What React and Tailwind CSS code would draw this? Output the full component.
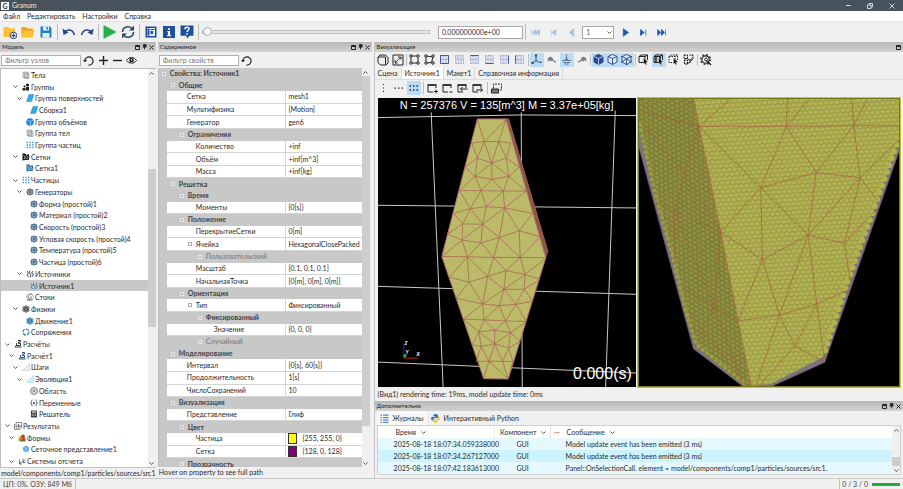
import React from "react";

const BLUE = "#1d4f9e";

function Svg({ className = "w-2 h-2", box = 16, children, ...rest }) {
  return (
    <svg viewBox={`0 0 ${box} ${box}`} className={`${className} shrink-0`} fill="none" aria-hidden="true" {...rest}>
      {children}
    </svg>
  );
}

/* ---------- tree icons ---------- */

const Bodies = () => (
  <Svg><path d="M2 2h9v11H2zM5 4h9v11H5z" fill="#ddd" stroke="#777" /><path d="M7 7h5M7 10h5" stroke="#999" /></Svg>
);
const Groups = () => (
  <Svg><circle cx="11" cy="4" r="3" fill="#111" /><circle cx="5" cy="7" r="2" fill="#111" /><path d="M1 10h6v5H1zM8 8h6v7H8z" fill="#222" /></Svg>
);
const Surface = () => <Svg><path d="M6 1h10l-5 14H1z" fill="#31a9e6" stroke="#1b8ccb" /></Svg>;
const Volume = () => (
  <Svg><circle cx="8" cy="8" r="7.500" fill="#1d86e0" /><path d="M3 5l6 2 5-3M9 7v8" stroke="#a8dcff" strokeWidth="1.500" /></Svg>
);
const Dots = () => (
  <Svg><path d="M1 3h14M1 8h14M1 13h14" stroke="#4a9be0" strokeWidth="3" strokeDasharray="3 2.500" /></Svg>
);
function Mesh({ color }) {
  return (
    <Svg>
      <path d="M1 1h5l3 3 4-2 2 6-2 6H6l-5 1z" fill={color} />
      <path d="M3 5l4 3-3 4M9 5l3 4-4 4" stroke="#fff" strokeWidth="1.500" />
    </Svg>
  );
}
function Gen({ color }) {
  return (
    <Svg>
      <circle cx="8" cy="8" r="6.500" fill={color} />
      <path d="M8 0v16M0 8h16M2 2l12 12M14 2L2 14" stroke={color} />
      <path d="M4 6l4-2 4 3-1 4-5 1z" stroke="#dfe6ee" />
    </Svg>
  );
}
function Source({ color }) {
  return (
    <Svg>
      <path d="M2 2l3 5-3 2 3 5M8 1L6 6l4 3-2 6M14 2l-3 4 4 2-3 6" stroke={color} strokeWidth="1.800" />
    </Svg>
  );
}
const Sink = () => (
  <Svg><path d="M8 8c2-2 4 1 2 3s-6 1-6-3 5-7 9-4M2 14h11" stroke="#444" strokeWidth="1.500" /><circle cx="8" cy="8" r="7" stroke="#888" /></Svg>
);
function Atom({ color }) {
  return (
    <Svg>
      <g stroke={color} strokeWidth="1.800">
        <ellipse cx="8" cy="8" rx="3" ry="7" />
        <ellipse cx="8" cy="8" rx="3" ry="7" transform="rotate(60 8 8)" />
        <ellipse cx="8" cy="8" rx="3" ry="7" transform="rotate(120 8 8)" />
      </g>
      <circle cx="8" cy="8" r="2" fill={color} />
    </Svg>
  );
}
const Ring = () => <Svg><circle cx="8" cy="8" r="6" stroke="#2b7fb0" strokeWidth="2.500" strokeDasharray="7 2" /></Svg>;
function Calc({ color }) {
  return (
    <Svg><path d="M8 1h5v3H9v3h4v4H5V6M2 14h13M4 11l-2 3" stroke={color} strokeWidth="2" /></Svg>
  );
}
function Steps({ fill, line }) {
  return <Svg><path d="M15 1v14H1z" fill={fill} stroke={line} /></Svg>;
}
const Domain = () => (
  <Svg><circle cx="8" cy="8" r="7" stroke="#555" strokeWidth="1.500" /><path d="M8 2v12M2 8h12M4 4l8 8M12 4l-8 8" stroke="#666" /></Svg>
);
const Vars = () => (
  <Svg><path d="M5 2C2 2 4 8 1 8c3 0 1 6 4 6M11 2c3 0 1 6 4 6-3 0-1 6-4 6M6 6l4 5M10 6l-4 5" stroke="#222" strokeWidth="1.500" /></Svg>
);
const Solver = () => (
  <Svg><path d="M2 1h12v14H2z" fill="#444" /><path d="M4 4h8" stroke="#fff" strokeWidth="2" /><path d="M4 8h8M4 11h8" stroke="#ccc" strokeDasharray="2 1" strokeWidth="1.500" /></Svg>
);
const Results = () => (
  <Svg><path d="M4 1h11v11H4zM1 4v11h11" stroke="#555" strokeWidth="1.300" /><path d="M6 10V7M9 10V4M12 10V6" stroke="#555" strokeWidth="1.800" /></Svg>
);
const Forms = () => (
  <Svg><path d="M1 8l4-5 3 5v6H1z" fill="#e0a020" /><circle cx="10" cy="5" r="4" fill="#8a5a30" /><path d="M8 8h7v7H8z" fill="#c8442c" /><path d="M4 10h5v5H4z" fill="#3f8f45" /></Svg>
);
const MeshView = () => (
  <Svg><path d="M8 1l6 4v6l-6 4-6-4V5z" fill="#5aa9e6" /><path d="M5 5l3 2 4-1M8 7v6" stroke="#d5efff" /></Svg>
);
const Frames = () => (
  <Svg><path d="M3 5v9h5M3 14l4-5M10 3v8h5M10 11l4-6" stroke="#444" strokeWidth="1.500" /></Svg>
);

const TREE = [
  [2, "Тела", <Bodies />],
  [2, "Группы", <Groups />, true],
  [3, "Группа поверхностей", <Surface />, true],
  [4, "Сборка1", <Surface />],
  [3, "Группа объёмов", <Volume />],
  [3, "Группа тел", <Bodies />],
  [3, "Группа частиц", <Dots />],
  [2, "Сетки", <Mesh color="#111" />, true],
  [3, "Сетка1", <Mesh color="#1f6f9c" />],
  [2, "Частицы", <Dots />, true],
  [3, "Генераторы", <Gen color="#666" />, true],
  [4, "Форма (простой)1", <Gen color="#4b7196" />],
  [4, "Материал (простой)2", <Gen color="#4b7196" />],
  [4, "Скорость (простой)3", <Gen color="#4b7196" />],
  [4, "Угловая скорость (простой)4", <Gen color="#4b7196" />],
  [4, "Температура (простой)5", <Gen color="#4b7196" />],
  [4, "Частица (простой)6", <Gen color="#4b7196" />],
  [3, "Источники", <Source color="#444" />, true],
  [4, "Источник1", <Source color="#2f7fb5" />],
  [3, "Стоки", <Sink />],
  [2, "Физики", <Atom color="#555" />, true],
  [3, "Движение1", <Atom color="#2a81ad" />],
  [2, "Сопряжения", <Ring />],
  [0, "Расчёты", <Calc color="#333" />, true],
  [1, "Расчёт1", <Calc color="#24508c" />, true],
  [2, "Шаги", <Steps fill="#eee" line="#bbb" />, true],
  [3, "Эволюция1", <Steps fill="#d6ecfa" line="#9ccbe8" />, true],
  [4, "Область", <Domain />],
  [4, "Переменные", <Vars />],
  [4, "Решатель", <Solver />],
  [0, "Результаты", <Results />, true],
  [1, "Формы", <Forms />, true],
  [2, "Сеточное представление1", <MeshView />],
  [1, "Системы отсчета", <Frames />, true],
];

const TREE_PAD = ["pl-[4px]", "pl-[8px]", "pl-[12px]", "pl-[16px]", "pl-[20px]"];

// [kind, level, name, value, extra]; kinds: g = group, d = disabled group, p = property
const PROPS = [
  ["g", 0, "Свойства: Источник1"],
  ["g", 1, "Общие"],
  ["p", 2, "Сетка", "mesh1"],
  ["p", 2, "Мультифизика", "{Motion}"],
  ["p", 2, "Генератор", "gen6"],
  ["g", 2, "Ограничения"],
  ["p", 3, "Количество", "+inf"],
  ["p", 3, "Объём", "+inf[m^3]"],
  ["p", 3, "Масса", "+inf[kg]"],
  ["g", 1, "Решетка"],
  ["g", 2, "Время"],
  ["p", 3, "Моменты", "{0[s]}"],
  ["g", 2, "Положение"],
  ["p", 3, "ПерекрытиеСетки", "0[m]"],
  ["p", 3, "Ячейка", "HexagonalClosePacked", "box"],
  ["d", 4, "Пользовательский"],
  ["p", 3, "Масштаб", "{0.1, 0.1, 0.1}"],
  ["p", 3, "НачальнаяТочка", "{0[m], 0[m], 0[m]}"],
  ["g", 2, "Ориентация"],
  ["p", 3, "Тип", "Фиксированный", "box"],
  ["g", 4, "Фиксированный"],
  ["p", 5, "Значение", "{0, 0, 0}"],
  ["d", 4, "Случайный"],
  ["g", 1, "Моделирование"],
  ["p", 2, "Интервал", "{0[s], 60[s]}"],
  ["p", 2, "Продолжительность", "1[s]"],
  ["p", 2, "ЧислоСохранений", "10"],
  ["g", 1, "Визуализация"],
  ["p", 2, "Представление", "Глиф"],
  ["g", 2, "Цвет"],
  ["p", 3, "Частица", "{255, 255, 0}", "bg-[#ffff00]"],
  ["p", 3, "Сетка", "{128, 0, 128}", "bg-[#800080]"],
  ["g", 2, "Прозрачность"],
];

const GROUP_PAD = ["pl-[3px]", "pl-[12px]", "pl-[21px]", "pl-[30px]", "pl-[39px]"];
const PROP_PAD = ["", "", "pl-[12px]", "pl-[21px]", "pl-[30px]", "pl-[39px]"];

/* ---------- small shared pieces ---------- */

function Chevron({ up, className = "w-[5px] h-[5px]" }) {
  return (
    <Svg className={className} box={10}>
      <path d={up ? "M1 7l4-4 4 4" : "M1 3l4 4 4-4"} stroke="#444" strokeWidth="1.800" />
    </Svg>
  );
}

function DockTitle({ title, full = true }) {
  return (
    <div className="h-[10px] shrink-0 flex items-center justify-between px-[2px] bg-linear-to-b from-[#b8b8b8] to-[#d2d2d2]">
      <span className="text-[6px] leading-[10px] text-[#222]">{title}</span>
      <span className="flex items-center gap-[2px]">
        <Svg className="w-[5px] h-[5px]" box={10}><path d="M1 1h8v8H1zM1 3h8" stroke="#222" strokeWidth="2" /></Svg>
        {full && <Svg className="w-[5px] h-[6px]" box={10}><path d="M3 0h5v5H3zM1 5h8M5 5v5" fill="#222" stroke="#222" strokeWidth="1.500" /></Svg>}
        {full && <Svg className="w-[5px] h-[5px]" box={10}><path d="M1 1l8 8M9 1l-8 8" stroke="#222" strokeWidth="2" /></Svg>}
      </span>
    </div>
  );
}

function Scrollbar({ children }) {
  return (
    <div className="w-2 shrink-0 flex flex-col items-center bg-[#f0f0f0]">
      <span className="h-2 flex items-center"><Chevron up /></span>
      <div className="flex-1 self-stretch flex flex-col">{children}</div>
      <span className="h-2 flex items-center"><Chevron /></span>
    </div>
  );
}

function Btn({ label, on, className = "w-[14px] h-[14px]", children }) {
  return (
    <button type="button" aria-label={label} className={`${className} shrink-0 flex items-center justify-center ${on ? "bg-[#bcdcf4]" : ""}`}>
      {children}
    </button>
  );
}

const Sep = ({ className = "mx-px h-3" }) => <span className={`w-px shrink-0 bg-[#bdbdbd] ${className}`} />;

const Rotate = () => (
  <Svg className="w-[11px] h-[11px]" box={24}>
    <path d="M4 14a9 9 0 1 1 8 8" stroke="#222" strokeWidth="2.500" />
    <path d="M0 11l4 5 5-5z" fill="#222" />
  </Svg>
);

/* ---------- top area ---------- */

function TitleBar() {
  return (
    <header className="h-[11px] shrink-0 flex items-center justify-between bg-[#48525a] text-white pl-px">
      <div className="flex items-center gap-[3px]">
        <span className="w-2 h-2 flex items-center justify-center bg-white text-[#16305c] text-[7px] leading-[8px] font-bold">G</span>
        <span className="text-[7px] leading-[11px] text-[#e8e8e8]">Granum</span>
      </div>
      <div className="flex items-center gap-[14px] pr-[7px]">
        <Btn label="Свернуть" className="w-2 h-2"><Svg className="w-[5px] h-[5px]" box={10}><path d="M0 5h10" stroke="#fff" strokeWidth="1.500" /></Svg></Btn>
        <Btn label="Развернуть" className="w-2 h-2"><Svg className="w-[6px] h-[6px]" box={12}><path d="M1 4h7v7H1zM4 4V1h7v7H8" stroke="#fff" strokeWidth="1.500" /></Svg></Btn>
        <Btn label="Закрыть" className="w-2 h-2"><Svg className="w-[6px] h-[6px]" box={12}><path d="M1 1l10 10M11 1L1 11" stroke="#fff" strokeWidth="1.500" /></Svg></Btn>
      </div>
    </header>
  );
}

function MenuBar() {
  return (
    <nav className="h-[11px] shrink-0 flex items-center gap-[7px] pl-[3px] bg-white border-b border-[#e4e4e4] text-[7px] leading-[10px]">
      {["Файл", "Редактировать", "Настройки", "Справка"].map((m) => (
        <button key={m} type="button">{m}</button>
      ))}
    </nav>
  );
}

function FolderIcon({ plus }) {
  return (
    <Svg className="w-[14px] h-[14px]" box={28}>
      <path d="M1 4h9l3 3h11v17H1z" fill={plus ? "#ffc02e" : "#f0a020"} />
      {!plus && <path d="M5 11h22l-4 14H1z" fill="#ffc233" />}
      {plus && <circle cx="21" cy="21" r="6.500" fill="#fff" stroke="#2c3e63" strokeWidth="2" />}
      {plus && <path d="M21 17v8M17 21h8" stroke="#2c3e63" strokeWidth="2.500" />}
    </Svg>
  );
}

function Toolbar() {
  const big = "w-[14px] h-[14px]";
  return (
    <div className="h-5 shrink-0 flex items-center pl-[3px] bg-[#f0f0f0]">
      <div className="flex gap-1">
        <Btn label="Новый"><FolderIcon plus /></Btn>
        <Btn label="Открыть"><FolderIcon /></Btn>
        <Btn label="Сохранить">
          <Svg className="w-3 h-3" box={24}><path d="M1 1h19l3 3v19H1z" fill="#1f7fc4" /><path d="M6 1h12v8H6zM5 14h14v9H5z" fill="#eaf4fb" /><path d="M13 2h3v5h-3z" fill="#1f7fc4" /></Svg>
        </Btn>
      </div>
      <Sep className="mx-1 h-4" />
      <div className="flex gap-1">
        <Btn label="Отменить"><Svg className={big} box={28}><path d="M5 15c5-8 17-7 20 5" stroke="#2e4487" strokeWidth="3" /><path d="M1 7l2 13 10-5z" fill="#2e4487" /></Svg></Btn>
        <Btn label="Вернуть"><Svg className={big} box={28}><path d="M23 15C18 7 6 8 3 20" stroke="#2e4487" strokeWidth="3" /><path d="M27 7l-2 13-10-5z" fill="#2e4487" /></Svg></Btn>
      </div>
      <Sep className="mx-1 h-4" />
      <div className="flex gap-1">
        <Btn label="Запуск"><Svg className={big} box={28}><path d="M1 0v28l26-14z" fill="#27b14b" /></Svg></Btn>
        <Btn label="Обновить">
          <Svg className={big} box={28}><path d="M3 14C3 3 17 0 23 8M25 14c0 11-14 14-20 6" stroke="#34495e" strokeWidth="3" /><path d="M26 1v10H16zM2 27V17h10z" fill="#34495e" /></Svg>
        </Btn>
      </div>
      <Sep className="mx-1 h-4" />
      <div className="flex gap-1">
        <Btn label="Окна"><Svg className="w-3 h-3" box={24}><path d="M1 1h22v22H1z" fill={BLUE} /><path d="M4 4h16v16H4z" fill="#e6eef8" /><path d="M5 5h4v14H5zM11 6h8v2h-8zM11 10h5v6h-5z" fill={BLUE} /></Svg></Btn>
        <Btn label="Сведения"><Svg className="w-3 h-3" box={22}><path d="M0 0h22v22H0z" fill={BLUE} /><path d="M9 4h4v3H9zM8 9h5v8h2v2H7v-2h2v-6H8z" fill="#fff" /></Svg></Btn>
        <Btn label="Помощь"><Svg className={big} box={26}><path d="M1 1h24v19h-7l-5 5-1-5H1z" fill={BLUE} /><path d="M9 8c0-5 8-5 8-1 0 3-4 3-4 6M13 15v3" stroke="#fff" strokeWidth="2.500" /></Svg></Btn>
      </div>
      <Sep className="ml-1 mr-[3px] h-4" />
      <input
        type="range"
        aria-label="Время"
        defaultValue="0"
        className="flex-[232] min-w-0 h-[9px] appearance-none bg-transparent [&::-webkit-slider-runnable-track]:h-1 [&::-webkit-slider-runnable-track]:border [&::-webkit-slider-runnable-track]:border-[#c4c4c4] [&::-webkit-slider-runnable-track]:bg-[#e4e4e4] [&::-webkit-slider-thumb]:appearance-none [&::-webkit-slider-thumb]:w-[9px] [&::-webkit-slider-thumb]:h-[9px] [&::-webkit-slider-thumb]:-mt-[4px] [&::-webkit-slider-thumb]:rounded-full [&::-webkit-slider-thumb]:border [&::-webkit-slider-thumb]:border-[#adadad] [&::-webkit-slider-thumb]:bg-[#f6f6f6]"
      />
      <input
        type="text"
        aria-label="Текущее время"
        defaultValue="0.000000000e+00"
        className="ml-2 flex-[79] min-w-0 h-[13px] px-[3px] bg-white border border-[#a8a8a8] text-[7px] leading-[11px]"
      />
      <Sep className="mx-[2px] h-4" />
      <div className="flex-[382] flex items-center gap-1">
        {["M1 2v8M2 6l5-4v8zM7 6l5-4v8z", "M3 2v8M4 6l5-4v8z", "M3 6l6-5v10z"].map((d, i) => (
          <Btn key={d} label={["В начало", "Шаг назад", "Назад"][i]}>
            <Svg className="w-[9px] h-[9px]" box={12}><path d={d} fill="#a9c1e2" stroke="#a9c1e2" /></Svg>
          </Btn>
        ))}
        <div className="relative flex">
          <select aria-label="Шаг" className="block appearance-none w-8 h-[13px] pl-[3px] bg-white border border-[#a8a8a8] text-[7px] leading-[11px] text-[#666]">
            <option>1</option>
          </select>
          <span className="absolute inset-y-0 right-[2px] flex items-center pointer-events-none"><Chevron /></span>
        </div>
        {["M3 1v10l7-5z", "M2 2v8l5-4zM9 2v8", "M1 2v8l4-4zM6 2v8l4-4zM11.500 2v8"].map((d, i) => (
          <Btn key={d} label={["Вперёд", "Шаг вперёд", "В конец"][i]}>
            <Svg className="w-[9px] h-[9px]" box={12}><path d={d} fill="#1f57b0" stroke="#1f57b0" /></Svg>
          </Btn>
        ))}
      </div>
    </div>
  );
}

/* ---------- model tree ---------- */

function ModelDock() {
  return (
    <section className="flex-[156] min-w-0 flex flex-col bg-[#f0f0f0]">
      <DockTitle title="Модель" />
      <div className="h-4 shrink-0 flex items-center pl-px">
        <input type="text" aria-label="Фильтр узлов" placeholder="Фильтр узлов" className="w-20 h-[11px] px-[3px] bg-white border border-[#b0b0b0] text-[7px] leading-[9px] placeholder:text-[#777]" />
        <Btn label="Сбросить" className="w-[15px] h-[14px]"><Rotate /></Btn>
        <Btn label="Развернуть всё"><Svg className="w-[9px] h-[9px]"><path d="M8 0v16M0 8h16" stroke="#222" strokeWidth="2.500" /></Svg></Btn>
        <Btn label="Свернуть всё"><Svg className="w-[9px] h-[9px]"><path d="M0 8h16" stroke="#222" strokeWidth="2.500" /></Svg></Btn>
        <Btn label="Видимость" className="w-[15px] h-[14px]">
          <Svg className="w-[11px] h-[11px]" box={22}><path d="M1 11c5-8 15-8 20 0-5 7-15 7-20 0z" stroke="#222" strokeWidth="2" /><circle cx="11" cy="10.500" r="4.500" fill="#222" /><circle cx="11" cy="10" r="1.500" fill="#fff" /></Svg>
        </Btn>
      </div>
      <div className="flex-1 min-h-0 flex border-l border-t border-[#bcbcbc]">
        <ul className="flex-1 min-w-0 flex flex-col bg-white overflow-hidden">
          {TREE.map(([level, name, icon, open]) => (
            <li key={name + level} className={`flex-1 min-h-0 flex items-center ${TREE_PAD[level]} ${name === "Источник1" ? "bg-[#c8c8c8]" : ""}`}>
              <span className="w-[6px] mr-[3px]">{open && <Chevron />}</span>
              {icon}
              <span className="ml-px text-[7px] leading-[10px] whitespace-nowrap">{name}</span>
            </li>
          ))}
        </ul>
        <Scrollbar>
          <div className="flex-[92]" />
          <div className="flex-[159] bg-[#cdcdcd]" />
          <div className="flex-[132]" />
        </Scrollbar>
      </div>
      <p className="h-[11px] shrink-0 px-px text-[7px] leading-[10px] whitespace-nowrap overflow-hidden border-t border-[#c4c4c4]">
        model/components/comp1/particles/sources/src1
      </p>
    </section>
  );
}

/* ---------- property grid ---------- */

const Fold = () => <span className="w-1 h-1 mr-1 shrink-0 border border-[#e8e8e8] bg-[#bdbdbd]" />;

function PropRow({ row }) {
  const [kind, level, name, value, extra] = row;
  if (kind !== "p") {
    return (
      <tr>
        <th colSpan={3} scope="colgroup" className={`p-0 text-left font-bold ${kind === "d" ? "text-[#888]" : "text-[#444]"}`}>
          <div className={`flex items-center ${GROUP_PAD[level]}`}><Fold />{name}</div>
        </th>
      </tr>
    );
  }
  return (
    <tr>
      <td className="p-0" />
      <th scope="row" className="p-0 text-left font-normal bg-white border-b border-r border-[#d4d4d4]">
        <div className={`flex items-center ${PROP_PAD[level]}`}>
          <span className="w-2 shrink-0">{extra === "box" && <span className="block w-1 h-1 border border-[#aaa]" />}</span>
          {name}
        </div>
      </th>
      <td className="p-0 pl-[2px] bg-white border-b border-[#d4d4d4]">
        <div className="flex items-center gap-[5px] whitespace-nowrap">
          {extra && extra !== "box" && <span className={`w-[9px] h-[11px] border border-[#333] ${extra}`} />}
          {value}
        </div>
      </td>
    </tr>
  );
}

function PropsDock() {
  return (
    <section className="flex-[214] min-w-0 flex flex-col bg-[#f0f0f0]">
      <DockTitle title="Содержимое" />
      <div className="h-4 shrink-0 flex items-center pl-px">
        <input type="text" aria-label="Фильтр свойств" placeholder="Фильтр свойств" className="w-20 h-[11px] px-[3px] bg-white border border-[#b0b0b0] text-[7px] leading-[9px] placeholder:text-[#777]" />
        <Btn label="Сбросить" className="w-[15px] h-[14px]"><Rotate /></Btn>
      </div>
      <div className="flex-1 min-h-0 flex pr-[2px] border-l border-[#bcbcbc]">
        <div className="flex-1 min-w-0 overflow-hidden bg-[#c8c8c8]">
          <table className="w-full h-[calc(100%+3px)] table-fixed border-separate border-spacing-0 text-[7px] leading-[11px]">
            <colgroup>
              <col className="w-2" />
              <col className="w-[59%]" />
              <col />
            </colgroup>
            <tbody>
              {PROPS.map((row, i) => <PropRow key={i} row={row} />)}
            </tbody>
          </table>
        </div>
        <Scrollbar>
          <div className="flex-[350] bg-[#cdcdcd]" />
          <div className="flex-[33]" />
        </Scrollbar>
      </div>
      <p className="h-[11px] shrink-0 px-px text-[7px] leading-[11px]">Hover on property to see full path</p>
    </section>
  );
}

/* ---------- visualization ---------- */

const VI = "w-[11px] h-[11px]";

function BoxIcon({ nodes }) {
  return (
    <Svg className={VI} box={22}>
      <path d={nodes ? "M4 4l14 2-3 11-11 1z" : "M4 4h14v14H4z"} stroke="#222" strokeWidth="2" />
      <g fill="#f0f0f0" stroke="#222" strokeWidth="2">
        <circle cx="4" cy="4" r="2.500" /><circle cx="18" cy="4" r="2.500" />
        <circle cx="4" cy="18" r="2.500" /><circle cx="18" cy="18" r="2.500" />
      </g>
    </Svg>
  );
}

// side: path of the highlighted edge of the viewing cube
function ViewIcon({ side }) {
  return (
    <Svg className="w-[9px] h-[9px]" box={18}>
      <path d="M1 1h16v16H1z" fill="#e3e5f4" stroke="#8288bd" strokeWidth="1.500" strokeDasharray="3 2" />
      <path d="M6 2v14M12 2v14M2 9h14" stroke="#8288bd" strokeWidth="1.200" strokeDasharray="2 1" />
      <path d={side} stroke="#4d559f" strokeWidth="2" />
    </Svg>
  );
}

function CubeIcon({ fill, nodes }) {
  return (
    <Svg className={VI} box={22}>
      <path d="M11 1l9 4v11l-9 5-9-5V5z" fill={fill || "#dcebf8"} stroke="#283f86" strokeWidth="1.800" />
      <path d="M2 5l9 4 9-4M11 9v12" stroke={fill ? "#c6dbf2" : "#283f86"} strokeWidth="1.800" />
      {nodes && <path d="M2 16l9-7 9 7M0 5h3M19 5h3M0 16h3M19 16h3M10 21h3" stroke="#283f86" strokeWidth="2" />}
    </Svg>
  );
}

function PickIcon({ kind }) {
  return (
    <Svg className={VI} box={22}>
      <path d="M2 5h12v12H2zM2 5l4-3h13v10M14 5l5-3" stroke="#222" strokeWidth="2" strokeDasharray={kind === "dash" ? "3 2" : undefined} />
      {kind === "edge" && <path d="M6 6v10M14 4v8" stroke="#222" strokeWidth="3" />}
      <path d="M11 8l9 8-4 1 2 4-2 1-3-4-2 3z" fill="#111" stroke="#f0f0f0" strokeWidth=".8" />
    </Svg>
  );
}

function PlaneIcon({ flip }) {
  return (
    <Svg className="w-[10px] h-[10px]" box={20}>
      <g transform={flip ? "translate(20 0) scale(-1 1)" : undefined}>
        <path d="M1 10c1-7 7-8 10-4l2 4-6 3-2-3-3 3z" fill="#75808c" /><path d="M11 11l7 3" stroke="#555" strokeWidth="2" />
      </g>
    </Svg>
  );
}

function VisToolbar() {
  return (
    <div className="h-[15px] shrink-0 flex items-center pl-px">
      <div className="flex gap-px">
        <Btn label="Куб"><Svg className="w-3 h-3" box={24}><path d="M6 2h11l5 5v11l-4 4H7l-5-5V6zM2 6h15v12M17 18l1 4" stroke="#222" strokeWidth="2" /></Svg></Btn>
        <Btn label="Вписать"><Svg className="w-3 h-3" box={24}><path d="M2 2h20v20H2z" stroke="#222" strokeWidth="2" /><path d="M6 18L18 6M12 6h6v6M6 12v6h6" stroke="#222" strokeWidth="2" strokeDasharray="5 1" /></Svg></Btn>
      </div>
      <Sep />
      <div className="flex gap-px">
        <Btn label="Рамка"><BoxIcon /></Btn>
        <Btn label="Контур"><BoxIcon nodes /></Btn>
        <Btn label="Спереди"><ViewIcon side="M1 1h16v16H1z" /></Btn>
        <Btn label="Сзади"><ViewIcon side="M5 5h1" /></Btn>
        <Btn label="Сверху"><ViewIcon side="M1 1h16" /></Btn>
        <Btn label="Снизу"><ViewIcon side="M1 17h16" /></Btn>
        <Btn label="Справа"><ViewIcon side="M17 1v16" /></Btn>
        <Btn label="Слева"><ViewIcon side="M1 1v16" /></Btn>
      </div>
      <Sep />
      <div className="flex gap-px">
        <Btn label="Оси" on><Svg className={VI} box={22}><path d="M10 2v11l-7 5M10 13l7 4" stroke="#2f4054" strokeWidth="1.800" /><path d="M8 1h4v4H8zM1 16h4v4H1zM18 15h3v3h-3z" fill="#2f4054" /></Svg></Btn>
        <Btn label="Плоскость"><PlaneIcon /></Btn>
        <Btn label="Сетка" on><Svg className={VI} box={22}><path d="M11 1v12M2 13h18M4 17h14M7 20h8" stroke="#607890" strokeWidth="2" /><path d="M7 9l4 5 4-5z" fill="#607890" /></Svg></Btn>
        <Btn label="Камера"><PlaneIcon flip /></Btn>
      </div>
      <Sep />
      <div className="flex">
        <Btn label="Заливка" on><CubeIcon fill="#2b4596" /></Btn>
        <Btn label="Каркас" on><CubeIcon /></Btn>
        <Btn label="Рёбра" on><CubeIcon nodes /></Btn>
      </div>
      <Sep />
      <div className="flex gap-px">
        <Btn label="Выбор тел"><PickIcon /></Btn>
        <Btn label="Выбор граней" on><PickIcon kind="edge" /></Btn>
        <Btn label="Выбор рёбер"><PickIcon kind="dash" /></Btn>
        <Btn label="Выбор частиц">
          <Svg className={VI} box={22}><path d="M2 2h7v7H2zM13 2h7v8h-6v9M3 12h6v8H3z" stroke="#222" strokeWidth="2" strokeDasharray="4 1" /><path d="M9 9l4 4M9 20l10-9" stroke="#222" strokeWidth="2" /></Svg>
        </Btn>
      </div>
      <Sep />
      <Btn label="Настройки вида">
        <Svg className="w-3 h-3" box={26}>
          <circle cx="12" cy="12" r="8" stroke="#222" strokeWidth="2.500" />
          <circle cx="12" cy="12" r="10.500" stroke="#222" strokeWidth="3" strokeDasharray="4 4.200" />
          <circle cx="13" cy="12" r="3" stroke="#222" strokeWidth="2" /><path d="M15 15l9 9" stroke="#222" strokeWidth="3" />
        </Svg>
      </Btn>
    </div>
  );
}

function WinIcon({ d }) {
  return (
    <Svg className="w-[11px] h-[11px]" box={22}>
      <path d="M12 18H2V4h16v6" stroke="#222" strokeWidth="2" /><path d="M1 4h18" stroke="#222" strokeWidth="3" />
      <path d={d} stroke="#222" strokeWidth="2" />
    </Svg>
  );
}

function LayoutToolbar() {
  return (
    <div className="h-[17px] shrink-0 flex items-center pl-[2px] border-t border-[#dcdcdc]">
      <div className="flex gap-px">
        <Btn label="Столбец"><Svg className="w-[10px] h-[10px]" box={20}><path d="M9 2v16" stroke="#333" strokeWidth="2.200" strokeDasharray="2.200 4.600" /></Svg></Btn>
        <Btn label="Строка"><Svg className="w-[10px] h-[10px]" box={20}><path d="M1 10h18" stroke="#333" strokeWidth="2.500" strokeDasharray="3 4" /></Svg></Btn>
        <Btn label="Таблица" on><Svg className="w-[10px] h-[10px]" box={20}><path d="M1 6h18M1 14h18" stroke="#222" strokeWidth="3" strokeDasharray="3 4" /></Svg></Btn>
      </div>
      <Sep className="mx-[2px] h-3" />
      <div className="flex gap-px">
        <Btn label="Добавить вид"><WinIcon d="M18 13v8M14 17h8" /></Btn>
        <Btn label="Удалить вид"><WinIcon d="M15 18h6" /></Btn>
        <Btn label="Предыдущий вид"><WinIcon d="M7 12h14M11 8l-4 4 4 4" /></Btn>
        <Btn label="Следующий вид"><WinIcon d="M8 14h13M17 10l4 4-4 4" /></Btn>
      </div>
      <Sep className="mx-[2px] h-3" />
      <Btn label="Снимок">
        <Svg className="w-[11px] h-[11px]" box={22}><path d="M5 11V2h16v12h-5" stroke="#222" strokeWidth="2" strokeDasharray="4 2" /><path d="M1 12h14v8H1z" fill="#777" stroke="#222" strokeWidth="2" /></Svg>
      </Btn>
    </div>
  );
}

const SCENE_MESH = [
  "M311 72L332 138L397 72L375 138L412 142M294 142L332 138L375 138",
  "M294 142L311 188L332 138L354 203L375 138L398 188L412 142",
  "M311 188L354 203L398 188L437 215M311 188L274 215L304 243L354 203L406 243L437 215",
  "M311 188L304 243L355 252L406 243L398 188M354 203L355 252",
  "M304 243L257 286L322 286L389 287L458 287L406 243L389 287L355 252L322 286L304 243",
  "M257 286L290 340L322 286L338 334L389 287L393 338L458 287",
  "M239 354L290 340L338 334L393 338L477 354M239 354L267 386L290 340L327 387L338 334",
  "M221 416L267 386L327 387L393 338L437 407L477 354M267 386L265 435L221 416",
  "M327 387L265 435L322 443L327 387L377 427L393 338M322 443L377 427L437 407L500 424",
  "M204 484L265 435L281 485L322 443L360 487L377 427L440 487L437 407M440 487L500 424",
  "M204 484L281 485L360 487L440 487L518 488",
  "M227 547L281 485L286 561L227 547M281 485L342 544L360 487L397 527L440 487L455 538L518 488",
  "M286 561L342 544L397 527L455 538L500 553L452 583L455 538L391 583L397 527M342 544L391 583L452 583",
  "M247 610L286 561L327 627L342 544M247 610L327 627L391 583L377 632L327 627M391 583L427 628L452 583L478 619L427 628L377 632",
  "M269 673L327 627L331 675L377 632L396 678L427 628L459 680L396 678L331 675L269 673",
  "M269 673L316 711L331 675L363 706L396 678L411 713L459 680M316 711L363 706L411 713L440 740",
  "M295 750L316 711L322 755L295 750M316 711L363 747L363 706M363 747L411 713L405 760L440 740",
  "M322 755L363 747L405 760L418 800L387 800L363 747L346 799L322 755L308 800L346 799L387 800L405 760",
  "M346 799L330 852M346 799L404 853L387 800M404 853L418 800",
];

function SceneView() {
  return (
    <div className="relative flex-[259] min-w-0 bg-black overflow-hidden">
      <svg viewBox="12 7 777 870" preserveAspectRatio="none" className="block w-full h-full" aria-hidden="true">
        <defs>
          <pattern id="grain" width="6" height="6" patternUnits="userSpaceOnUse">
            <path d="M0 0h6v6H0z" fill="#bdbd6c" /><circle cx="3" cy="3" r="1.500" fill="#afaf5c" />
          </pattern>
        </defs>
        <path
          d="M172 50L208 877M443 50L446 877M726 45L697 877M12 66L443 58L789 60M12 330L789 338M12 574L789 598M12 802L789 835"
          stroke="#c9c9c9" strokeWidth="3" fill="none"
        />
        <path d="M393 70L405 70L523 468L516 488z" fill="#8b5a3a" stroke="#a5546c" strokeWidth="3" />
        <path d="M311 70H397L517 488L404 853L330 852L204 484z" fill="url(#grain)" stroke="#b06a70" strokeWidth="3" />
        <path d={SCENE_MESH.join("")} stroke="#ab5e58" strokeWidth="2.200" fill="none" />
        <path d="M89 790V748" stroke="#1414c8" strokeWidth="4" />
        <path d="M89 790H132" stroke="#d01818" strokeWidth="3" />
        <circle cx="93" cy="783" r="5" fill="#28b428" />
      </svg>
      <span className="absolute inset-x-0 top-px text-center text-white font-['Liberation_Sans',sans-serif] text-[11px] leading-[12px] whitespace-nowrap">
        N = 257376 V = 135[m^3] M = 3.37e+05[kg]
      </span>
      <span className="absolute right-1 bottom-1 text-white font-['Liberation_Sans',sans-serif] text-[16px] leading-[18px]">0.000(s)</span>
      <span className="absolute left-[27px] bottom-[41px] text-white text-[5px] leading-[6px] italic font-bold">Z</span>
      <span className="absolute left-[28px] bottom-[32px] text-white text-[5px] leading-[6px] italic font-bold">Y</span>
      <span className="absolute left-[39px] bottom-[30px] text-white text-[5px] leading-[6px] italic font-bold">X</span>
    </div>
  );
}

const CLOSE_MESH = [
  "M190 90L452 90L654 88L790 88M285 7L190 90L375 276L452 90L455 7M520 7L452 90L541 230L654 88L648 7M695 7L654 88L673 246",
  "M375 276L541 230L673 246L790 130M673 246L728 320M255 410L375 276L380 495M375 276L517 420L541 230M517 420L673 246L626 445L517 420",
  "M626 445L728 335M626 445L645 575M255 410L380 495L517 420L543 629M517 420L431 663L380 495L307 680L431 663L543 629L640 585",
  "M543 629L477 757L431 663L360 878M543 629L567 805L477 757L370 878",
  "M20 45L190 90L150 220L117 350L255 410L145 230L10 70M60 318L117 350L117 500M117 350L235 637L255 410",
  "M135 575L235 637L307 680M175 765L235 637L320 870M165 660L320 860",
];

function CloseView() {
  return (
    <div className="flex-[263] min-w-0 -my-px border border-[#c4c43a] bg-black">
      <svg viewBox="10 7 780 871" preserveAspectRatio="none" className="block w-full h-full border border-[#77771c]" aria-hidden="true">
        <defs>
          <pattern id="beads" width="16" height="26" patternUnits="userSpaceOnUse" patternTransform="rotate(-4)">
            <path d="M0 0h16v26H0z" fill="#98984c" />
            <g fill="#b4b44e">
              <ellipse cx="8" cy="6.500" rx="7" ry="6" />
              <ellipse cx="0" cy="19.500" rx="7" ry="6" /><ellipse cx="16" cy="19.500" rx="7" ry="6" />
            </g>
          </pattern>
          <pattern id="beadsDark" width="16" height="24" patternUnits="userSpaceOnUse" patternTransform="rotate(32)">
            <path d="M0 0h16v24H0z" fill="#74743a" />
            <g fill="#93933c">
              <ellipse cx="8" cy="6" rx="7" ry="5.500" />
              <ellipse cx="0" cy="18" rx="7" ry="5.500" /><ellipse cx="16" cy="18" rx="7" ry="5.500" />
            </g>
          </pattern>
        </defs>
        <path d="M10 7H790V165L567 806L410 878H320L173 765L10 155z" fill="#77757a" />
        <path d="M10 155L173 765L320 878M410 878L567 806L790 165" stroke="#7b4a86" strokeWidth="2" fill="none" />
        <path d="M10 7H174L350 878H325L182 757L150 650L110 480L60 300L10 80z" fill="url(#beadsDark)" />
        <path d="M174 7H790V125L720 325L640 550L562 790L405 872L345 878L255 410z" fill="url(#beads)" />
        <path d="M12 85L60 300L110 480L150 650L182 752L322 866" stroke="#9c9c3f" strokeWidth="13" strokeDasharray="0 17" strokeLinecap="round" fill="none" />
        <path d="M790 125L720 325L640 550L562 790" stroke="#b3b34c" strokeWidth="17" strokeDasharray="0 22" strokeLinecap="round" fill="none" />
        <path d="M174 7L190 90L255 410L307 680L347 878" stroke="#ad7048" strokeWidth="3" fill="none" />
        <path d={CLOSE_MESH.join("")} stroke="#a5603f" strokeWidth="2.200" fill="none" />
      </svg>
    </div>
  );
}

function VisDock() {
  return (
    <section className="flex-1 min-h-0 flex flex-col">
      <DockTitle title="Визуализация" full={false} />
      <VisToolbar />
      <div className="h-3 shrink-0 flex items-stretch text-[7px] leading-[12px] whitespace-nowrap">
        {["Сцена", "Источник1", "Макет1", "Справочная информация"].map((t, i) => (
          <button key={t} type="button" className={`px-[3px] border-r border-[#dcdcdc] ${i === 1 ? "bg-white" : ""}`}>{t}</button>
        ))}
      </div>
      <LayoutToolbar />
      <div className="flex-1 min-h-0 flex gap-px pl-[3px] pr-[2px] pt-[2px]">
        <SceneView />
        <CloseView />
      </div>
      <p className="h-[14px] shrink-0 pl-[3px] text-[7px] leading-[14px]">(Вид1) rendering time: 19ms, model update time: 0ms</p>
    </section>
  );
}

/* ---------- log ---------- */

const LOG = [
  ["2025-08-18 18:07:34.059338000", "GUI", "Model update event has been emitted (3 ms)", "bg-[#e4f8fe]"],
  ["2025-08-18 18:07:34.267127000", "GUI", "Model update event has been emitted (3 ms)", "bg-[#cdf3fe]"],
  ["2025-08-18 18:07:42.183613000", "GUI", "Panel::OnSelectionCall. element = model/components/comp1/particles/sources/src1.", "bg-[#e4f8fe]"],
];

function LogDock() {
  return (
    <section className="shrink-0 flex flex-col">
      <DockTitle title="Дополнительно" />
      <div className="h-[14px] flex items-stretch pl-[2px] text-[7px] leading-[14px]">
        <button type="button" className="flex items-center gap-1 px-[3px] bg-[#f8f8f8]">
          <Svg className="w-[9px] h-[9px]" box={18}><path d="M1 2h3M1 7h3M1 12h3M1 17h3M6 2h11M6 7h11M6 12h11M6 17h11" stroke="#4a86c8" strokeWidth="2.500" /></Svg>
          Журналы
        </button>
        <button type="button" className="flex items-center gap-1 px-[4px]">
          <Svg className="w-[9px] h-[9px]" box={18}>
            <path d="M9 0c-5 0-4 3-4 5h5v1H2C-1 6 0 13 3 13h2v-3c0-2 1-2 3-2h4c2 0 2-1 2-3 0-4-1-5-5-5z" fill="#3470a5" />
            <path d="M9 18c5 0 4-3 4-5H8v-1h8c3 0 2-7-1-7h-1v3c0 2-1 2-3 2H7c-2 0-2 1-2 3 0 4 1 5 4 5z" fill="#f5c934" />
          </Svg>
          Интерактивный Python
        </button>
      </div>
      <div className="flex ml-[2px] mr-[2px] border border-[#d0d0d0]">
        <table className="flex-1 w-full table-fixed border-collapse bg-white text-[7px] leading-[12px] whitespace-nowrap">
          <colgroup>
            <col className="w-[15px]" />
            <col className="w-[102px]" />
            <col className="w-[56px]" />
            <col className="w-[13px]" />
            <col />
          </colgroup>
          <thead>
            <tr className="text-left">
              <th className="p-0" />
              <th className="p-0 pl-[3px] font-normal border-r border-[#e8e8e8]"><span className="inline-flex items-center gap-[5px]">Время <Chevron /></span></th>
              <th className="p-0 pl-[5px] font-normal border-r border-[#e8e8e8]"><span className="inline-flex items-center gap-[5px]">Компонент <Chevron /></span></th>
              <th className="p-0 pl-[3px] font-normal text-[#666]">···</th>
              <th className="p-0 pl-[3px] font-normal"><span className="inline-flex items-center gap-[5px]">Сообщение <Chevron /></span></th>
            </tr>
          </thead>
          <tbody>
            {LOG.map(([time, comp, msg, bg]) => (
              <tr key={time} className={bg}>
                <td className="p-0" />
                <td className="p-0 pl-px">{time}</td>
                <td className="p-0 text-center">{comp}</td>
                <td className="p-0" />
                <td className="p-0 pl-[2px] overflow-hidden">{msg}</td>
              </tr>
            ))}
          </tbody>
        </table>
        <Scrollbar>
          <div className="flex-[23]" />
          <div className="flex-[9] bg-[#cdcdcd]" />
        </Scrollbar>
      </div>
      <div className="h-[3px]" />
    </section>
  );
}

function StatusBar() {
  return (
    <footer className="h-[11px] shrink-0 flex items-center justify-between pl-[3px] pr-[3px] border-t border-[#c8c8c8] text-[7px] leading-[10px] text-[#444]">
      <span className="w-[73px] border-r border-[#c4c4c4]">ЦП: 0%. ОЗУ: 849 Мб</span>
      <span className="flex items-center gap-1 pl-[2px] border-l border-[#c4c4c4]">
        0 / 3 / 0
        <span className="w-7 h-[3px] bg-[#22ac38]" />
      </span>
    </footer>
  );
}

export default function App() {
  return (
    <div className="h-screen flex flex-col overflow-hidden bg-[#f0f0f0] text-[#2b2b2b] font-['Lato','Open_Sans',sans-serif]">
      <TitleBar />
      <MenuBar />
      <Toolbar />
      <main className="flex-1 min-h-0 flex gap-[2px] bg-[#f0f0f0]">
        <ModelDock />
        <PropsDock />
        <div className="flex-[529] min-w-0 flex flex-col border-l border-[#c4c4c4]">
          <VisDock />
          <LogDock />
        </div>
      </main>
      <StatusBar />
    </div>
  );
}
